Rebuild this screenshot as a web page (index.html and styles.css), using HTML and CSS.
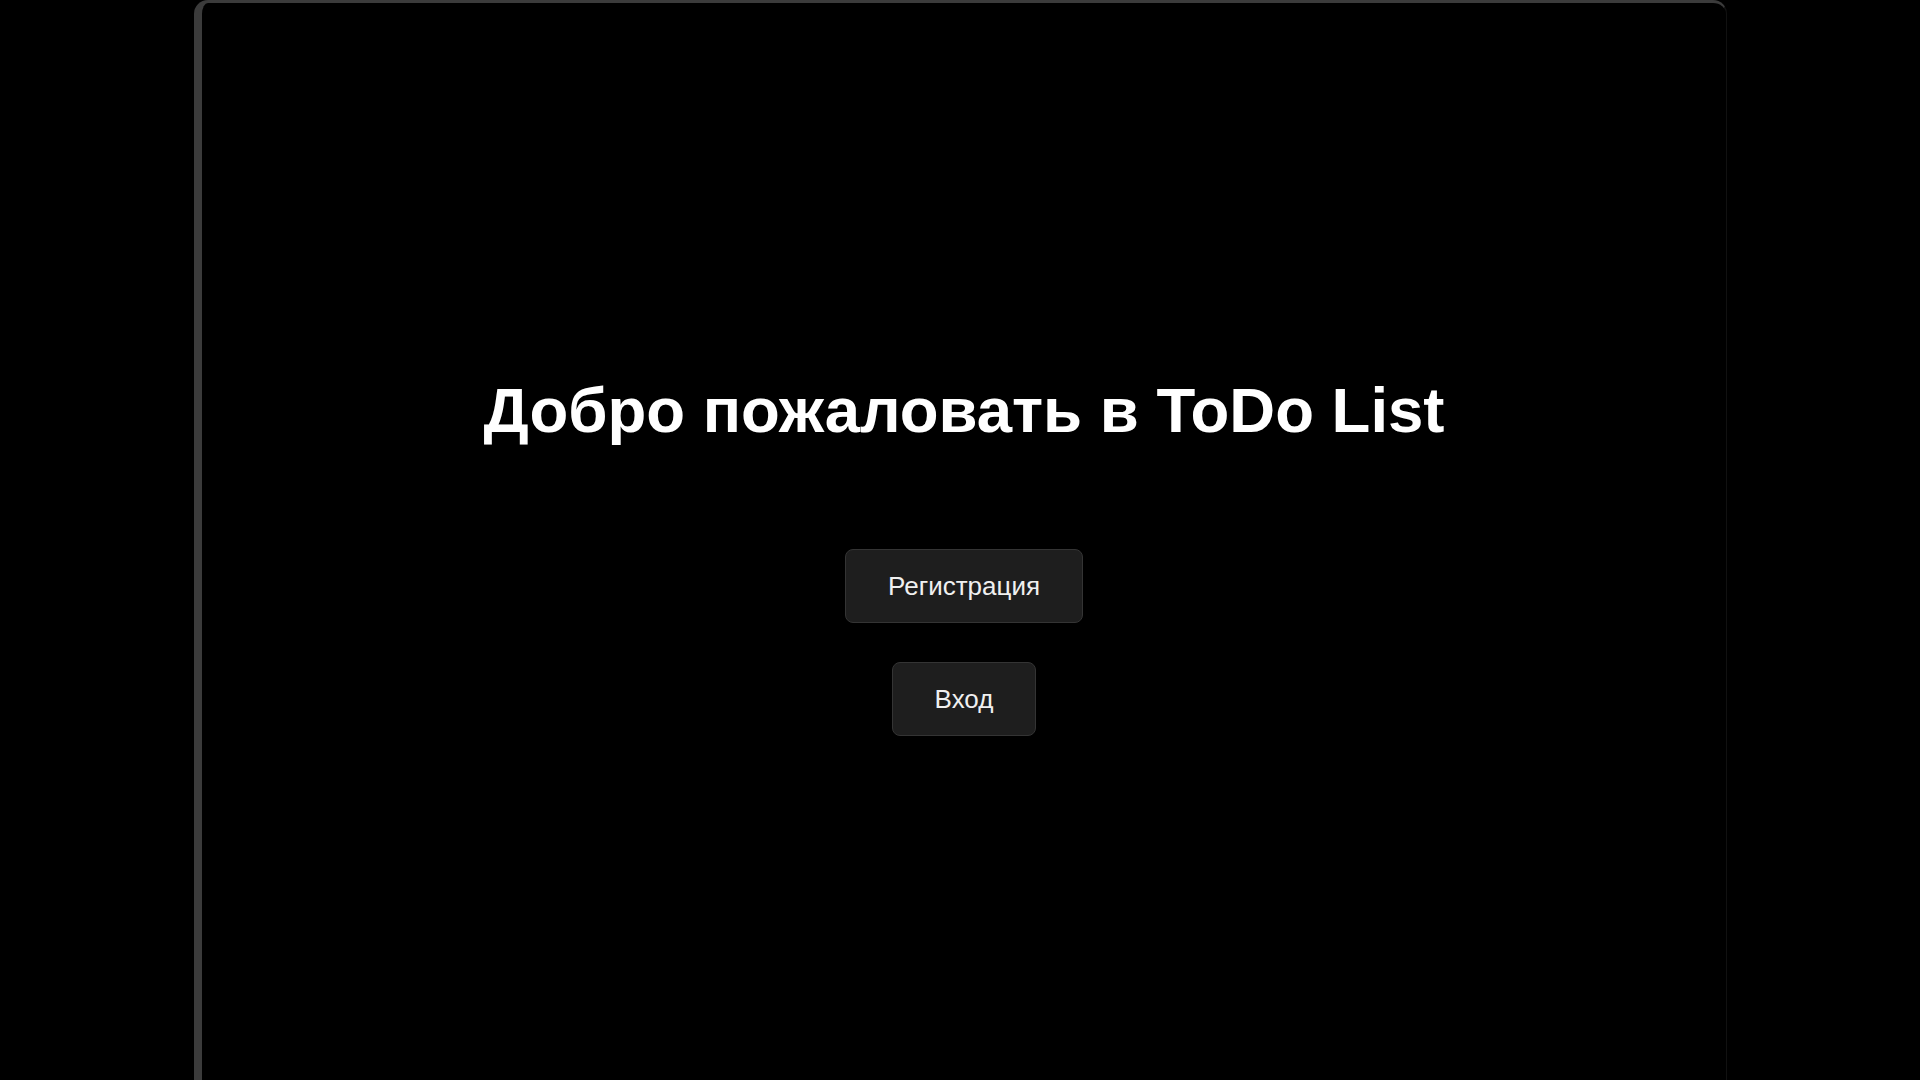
FILE: index.html
```html
<!DOCTYPE html>
<html lang="ru">
<head>
<meta charset="utf-8">
<title>ToDo List</title>
<link rel="stylesheet" href="styles.css">
</head>
<body>
<div class="frame">
  <main class="welcome">
    <h1 class="title">Добро пожаловать в ToDo List</h1>
    <div class="actions">
      <button class="btn">Регистрация</button>
      <button class="btn">Вход</button>
    </div>
  </main>
</div>
</body>
</html>
```
FILE: styles.css
```css
html, body {
  margin: 0;
  padding: 0;
  background: #000;
  height: 100%;
  overflow: hidden;
}
body {
  font-family: "Liberation Sans", Arial, sans-serif;
  color: #fff;
}
.frame {
  box-sizing: border-box;
  margin-left: 194px;
  width: 1533px;
  height: 1080px;
  border-top: 3px solid #3b3b3b;
  border-left: 8px solid #3b3b3b;
  border-right: 1px solid #111;
  border-top-left-radius: 14px;
  border-top-right-radius: 14px;
  background: #000;
  overflow: hidden;
}
.welcome {
  display: flex;
  flex-direction: column;
  align-items: center;
  padding-top: 371px;
}
.title {
  margin: 0;
  font-size: 63.5px;
  line-height: 72px;
  font-weight: bold;
  color: #fff;
}
.actions {
  margin-top: 103px;
  display: flex;
  flex-direction: column;
  align-items: center;
  gap: 39px;
}
.btn {
  font-family: "Liberation Sans", Arial, sans-serif;
  font-size: 26px;
  line-height: 30px;
  color: #f0f0f0;
  background: #1e1e1e;
  border: 1px solid #343434;
  border-radius: 8px;
  padding: 21px 42px;
}
```
